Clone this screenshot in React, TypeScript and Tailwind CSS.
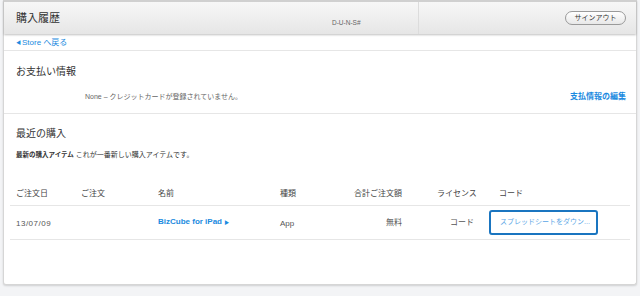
const font = { fontFamily: '"Liberation Sans", "Noto Sans CJK JP", sans-serif' };

export default function App() {
  return (
    <div className="h-[296px] w-[640px] overflow-hidden bg-[#f3f4f6] px-[3px]" style={font}>
      <div className="h-[285px] rounded-b-[3px] border-x border-b border-[#d6d6d6] bg-white shadow-[0_1px_2px_rgba(0,0,0,0.15)]">
        {/* header bar */}
        <div className="flex h-[34px] items-stretch border-t-2 border-[#d0d0d0] bg-gradient-to-b from-[#f7f7f7] to-[#e6e6e6] shadow-[0_1px_2px_rgba(0,0,0,0.25)]">
          <div className="flex w-[328px] items-center pl-[12px] text-[11px] text-[#333]">購入履歴</div>
          <div className="flex w-[86px] items-end pb-[6px] text-[6.5px] text-[#666]">D-U-N-S#</div>
          <div className="flex flex-1 items-center justify-end border-l border-[#dcdcdc] pr-[10px]">
            <button className="h-[14px] w-[61px] rounded-full border border-[#9a9a9a] bg-gradient-to-b from-white to-[#e8e8e8] text-[7px] text-[#333]">
              サインアウト
            </button>
          </div>
        </div>

        {/* back link */}
        <div className="flex h-[17px] items-center border-b border-[#e6e6e6] pl-[12px] pt-[2px] text-[8px] text-[#1a8ae0]">
          <span className="mr-[1px] text-[5px]">◀</span>Store へ戻る
        </div>

        {/* payment */}
        <div className="h-[63px] border-b border-[#e6e6e6] pl-[12px] pr-[10px]">
          <div className="pt-[13px] text-[10px] text-[#333]">お支払い情報</div>
          <div className="mt-[12px] flex items-center">
            <span className="ml-[69px] text-[7px] text-[#666]">None – クレジットカードが登録されていません。</span>
            <span className="ml-auto text-[8px] font-bold text-[#1a8ae0]">支払情報の編集</span>
          </div>
        </div>

        {/* recent */}
        <div className="px-[6px]">
          <div className="pl-[6px] pt-[12px] text-[10px] text-[#333]">最近の購入</div>
          <div className="pl-[6px] pt-[9px] text-[7px] text-[#333]">
            <span className="text-[6.5px] font-bold">最新の購入アイテム</span> これが一番新しい購入アイテムです。
          </div>

          <div className="mt-[27px] flex h-[18px] items-start border-b border-[#e6e6e6] text-[8px] text-[#444]">
            <span className="w-[65px] pl-[6px]">ご注文日</span>
            <span className="w-[77px] pl-[6px]">ご注文</span>
            <span className="w-[122px] pl-[6px]">名前</span>
            <span className="w-[50px] pl-[6px]">種類</span>
            <span className="w-[78px] text-right">合計ご注文額</span>
            <span className="w-[82px] pl-[35px]">ライセンス</span>
            <span className="pl-[15px]">コード</span>
          </div>

          <div className="flex h-[34px] items-center border-b border-[#e6e6e6] text-[8px] text-[#555]">
            <span className="mt-[3px] w-[65px] pl-[6px] tracking-[0.5px]">13/07/09</span>
            <span className="w-[77px]"></span>
            <span className="w-[122px] whitespace-nowrap pl-[6px] font-bold text-[#1a8ae0]">
              BizCube for iPad <span className="text-[5px]">▶</span>
            </span>
            <span className="mt-[3px] w-[50px] pl-[6px]">App</span>
            <span className="mt-[2px] w-[78px] text-right">無料</span>
            <span className="mt-[2px] w-[72px] text-right">コード</span>
            <span className="ml-[15px] flex h-[25px] w-[109px] items-center whitespace-nowrap rounded-[3px] border-2 border-[#1a75c0] pl-[9px] text-[7px] text-[#5aa6e6]">
              スプレッドシートをダウン...
            </span>
          </div>
        </div>
      </div>
    </div>
  );
}
